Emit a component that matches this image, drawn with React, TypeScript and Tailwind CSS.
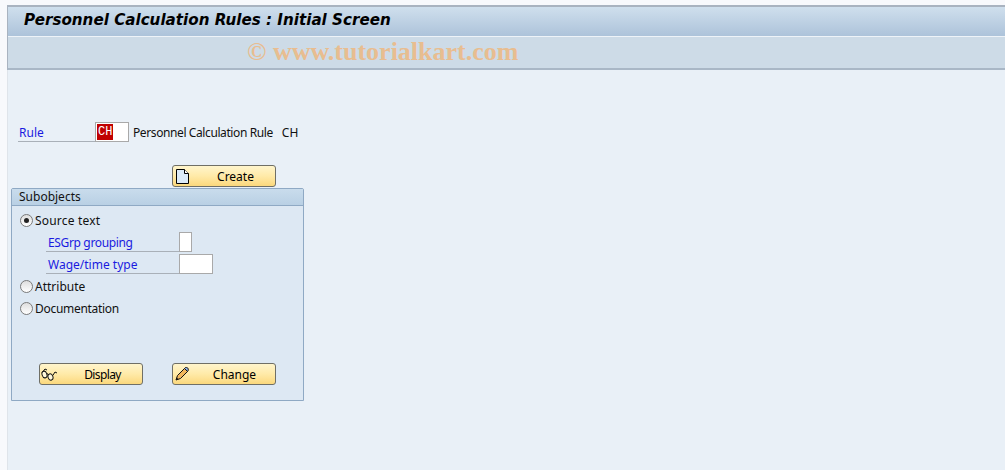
import React from 'react';

const FONT = "font-['Noto_Sans',sans-serif]";

const CreateIcon = () => (
  <svg width="13" height="15" viewBox="0 0 13 15" className="shrink-0">
    <path d="M.5.5h8l4 4v10H.5z" fill="#dcebf8" stroke="#000" />
    <path d="M8.5.5v4h4" fill="#fff" stroke="#000" />
  </svg>
);

const GlassesIcon = () => (
  <svg width="18" height="14" viewBox="0 0 18 14" className="shrink-0" fill="none" stroke="#111" strokeWidth="1">
    <ellipse cx="4.5" cy="7.5" rx="2.4" ry="3.4" fill="#fff8dc" transform="rotate(-20 4.5 7.5)" />
    <ellipse cx="10.5" cy="10" rx="2.4" ry="3.2" fill="#fff8dc" transform="rotate(-20 10.5 10)" />
    <path d="M6.5 7c.8-.5 1.5-.2 2 .8M2.2 5.5 5 2l2 1M12.8 8.5 15 5l2 1" />
  </svg>
);

const PencilIcon = () => (
  <svg width="14" height="14" viewBox="0 0 14 14" className="shrink-0">
    <path d="M1 13l1.5-4.5 7-7 3 3-7 7z" fill="#f2b75c" stroke="#111" />
    <path d="M9.5 1.5l1-1c1-.5 2 0 2.5 1s.5 2-.5 3z" fill="#8fb0e0" stroke="#111" />
    <path d="M1 13l.7-2.6 1.9 1.8z" fill="#111" />
  </svg>
);

/** Yellow SAP push button, icon on the left and caption centred */
const SapButton = ({
  icon,
  label,
  className = '',
  labelClass = 'pl-[23px]',
}: {
  icon: React.ReactNode;
  label: string;
  className?: string;
  labelClass?: string;
}) => (
  <button className={`relative flex h-[22px] w-[104px] items-center rounded-[3px] border border-[#6f6f66] bg-gradient-to-b from-[#fff5cc] via-[#ffeaa8] to-[#fbd87c] text-[12px] text-black ${className}`}>
    {icon}
    <span className={`absolute inset-x-0 top-0 text-center leading-[21px] ${labelClass}`}>{label}</span>
  </button>
);

const Radio = ({ label, checked, labelClass = '' }: { label: string; checked?: boolean; labelClass?: string }) => (
  <div className="flex h-[22px] items-center pl-[8px]">
    <span className="flex size-[13px] items-center justify-center rounded-full border border-[#7a7a7a] bg-gradient-to-b from-[#dedede] to-white">
      {checked && <span className="size-[5px] rounded-full bg-[#222]" />}
    </span>
    <span className={`ml-[2px] pt-[2px] text-[12px] text-[#111] ${labelClass}`}>{label}</span>
  </div>
);

const SubField = ({
  label,
  inputClass,
  labelClass = '',
}: {
  label: string;
  inputClass: string;
  labelClass?: string;
}) => (
  <div className="flex h-[22px] items-end pb-[1px] pl-[34px]">
    <span className={`h-[20px] w-[133px] border-b border-[#a9b0b8] pl-[2px] text-[12px] leading-[22px] text-[#1a1ae0] ${labelClass}`}>
      {label}
    </span>
    <span className={`h-[20px] border border-[#a9a9a9] bg-white ${inputClass}`} />
  </div>
);

export default function App() {
  return (
    <div className={`${FONT} h-[470px] w-[1005px] overflow-hidden bg-[#f8f9fc] pl-[7px] pt-[5px]`}>
      <div className="h-[465px] border-l border-[#dfe4ea] bg-[#e9f0f7]">
        <header className="-ml-px border-b-2 border-l border-t-2 border-b-[#a9b7c6] border-l-[#a9b3c0] border-t-[#a9b3c0]">
          <div className="flex h-[29px] items-center bg-gradient-to-b from-[#cfdfed] to-[#adc3da] pb-[3px] pl-[16px]">
            <h1 className="font-['DejaVu_Sans',sans-serif] text-[15.15px] font-bold italic text-black">
              Personnel Calculation Rules : Initial Screen
            </h1>
          </div>
          <div className="flex h-[32px] items-center border-t border-[#eef3f8] bg-[#cddbe7] pb-[2px] pl-[239px]">
            <span className="font-['Liberation_Serif',serif] text-[26px] font-bold text-[#e8bd90]">
              © www.tutorialkart.com
            </span>
          </div>
        </header>

        <main className="pl-[3px] pt-[52px]">
          <div className="flex h-[20px] items-stretch pl-[7px]">
            <span className="w-[77px] border-b border-[#a9b0b8] pl-[1px] text-[12px] leading-[21px] text-[#1a1ae0]">
              Rule
            </span>
            <span className="flex h-[20px] w-[34px] items-center border border-[#a9a9a9] bg-white pl-[1px]">
              <span className="bg-[#c00000] px-[1px] font-['Liberation_Mono',monospace] text-[12px] leading-[16px] text-white">
                CH
              </span>
            </span>
            <span className="ml-[4px] text-[12px] leading-[21px] tracking-[-0.4px] text-[#111]">
              Personnel Calculation Rule
            </span>
            <span className="ml-[9px] text-[12px] leading-[21px] text-[#111]">CH</span>
          </div>

          <div className="pl-[161px] pt-[23px]">
            <SapButton icon={<CreateIcon />} label="Create" className="pl-[3px]" />
          </div>

          <section className="mt-[1px] h-[213px] w-[293px] rounded-t-[2px] border border-[#8fa9c4] bg-[#dde8f3]">
            <h2 className="h-[17px] border-b border-[#8fa9c4] bg-gradient-to-b from-[#c9dcec] to-[#b9d0e4] pl-[7px] text-[12px] leading-[16px] text-[#111]">
              Subobjects
            </h2>
            <div className="pt-[3px]">
              <Radio label="Source text" checked labelClass="tracking-[0.2px]" />
              <SubField label="ESGrp grouping" inputClass="w-[13px]" labelClass="tracking-[-0.35px]" />
              <SubField label="Wage/time type" inputClass="w-[34px]" />
              <Radio label="Attribute" />
              <Radio label="Documentation" labelClass="tracking-[-0.3px]" />
            </div>
            <div className="flex gap-[29px] pl-[27px] pt-[44px]">
              <SapButton icon={<GlassesIcon />} label="Display" labelClass="pl-[23px] tracking-[-0.6px]" />
              <SapButton icon={<PencilIcon />} label="Change" className="pl-[2px]" labelClass="pl-[21px]" />
            </div>
          </section>
        </main>
      </div>
    </div>
  );
}
